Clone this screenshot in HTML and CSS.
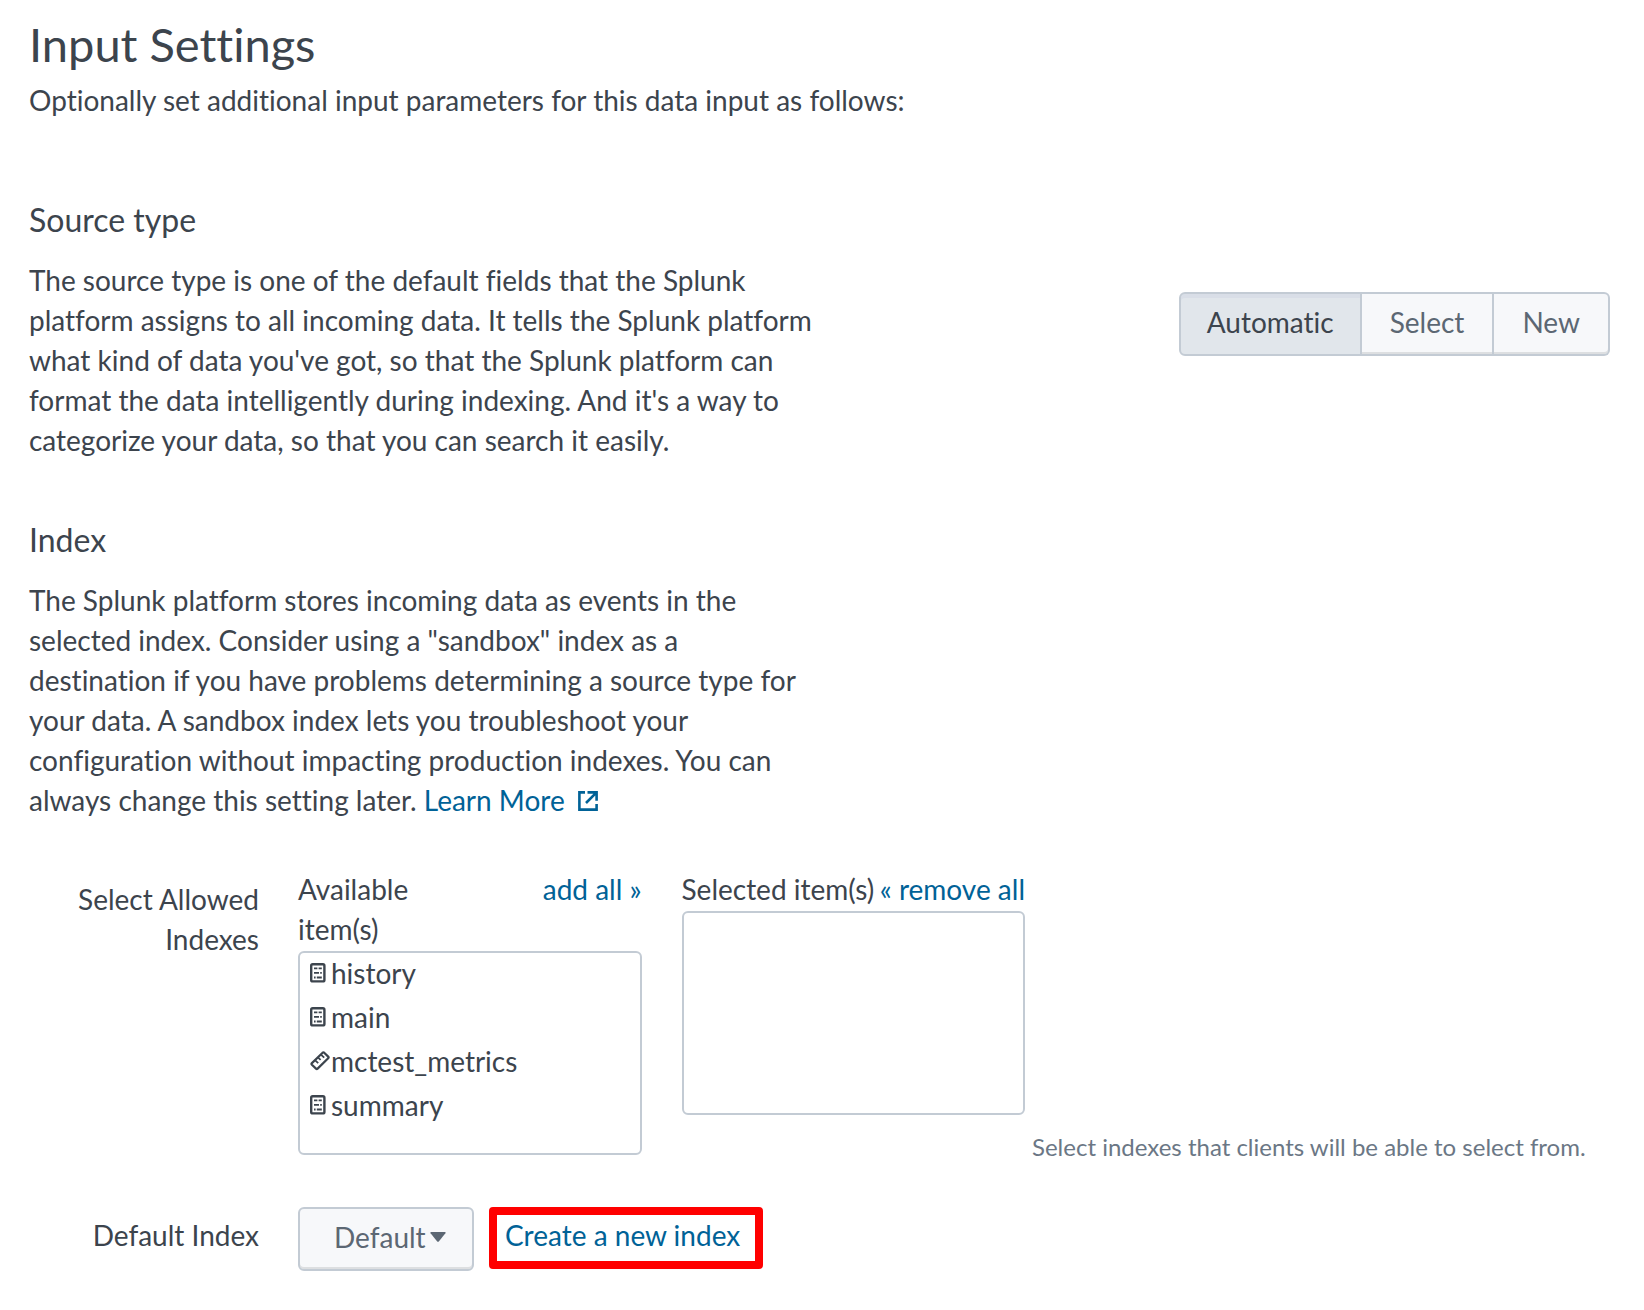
FILE: index.html
```html
<!DOCTYPE html>
<html lang="en">
<head>
<meta charset="utf-8">
<title>Input Settings</title>
<link rel="stylesheet" href="styles.css">
</head>
<body>
<svg class="sprite" aria-hidden="true">
  <symbol id="icon-events" viewBox="0 0 16 20">
    <rect x="1.2" y="1.2" width="13.2" height="17.2" rx="1.5" fill="none" stroke="currentColor" stroke-width="2.4"/>
    <path d="M4 5.3h3.4M8.6 5.3h3.2M4 9.9h5M10.2 9.9h1.6M4 14.5h1.6M6.8 14.5h5" stroke="currentColor" stroke-width="1.8"/>
  </symbol>
  <symbol id="icon-metrics" viewBox="0 0 20 20">
    <path d="M1.9 12.1 12.6 1.7q.8-.7 1.6 0l4 3.9q.8.8 0 1.6L7.6 17.6q-.8.8-1.6 0l-4.1-3.9q-.8-.8 0-1.6Z" fill="none" stroke="currentColor" stroke-width="2.2"/>
    <path d="m5.2 9.4 3 2.8M8.2 6.6l2.4 2.2M11.2 3.8l3 2.8" stroke="currentColor" stroke-width="1.8"/>
  </symbol>
</svg>
<main class="page">
  <header class="intro">
    <h1 class="title">Input Settings</h1>
    <p class="text">Optionally set additional input parameters for this data input as follows:</p>
  </header>

  <section class="section">
    <h2 class="heading">Source type</h2>
    <div class="section-row">
      <p class="text copy">The source type is one of the default fields that the Splunk platform assigns to all incoming data. It tells the Splunk platform what kind of data you've got, so that the Splunk platform can format the data intelligently during indexing. And it's a way to categorize your data, so that you can search it easily.</p>
      <div class="button-group" role="group" aria-label="Source type">
        <button type="button" class="button button-active" aria-pressed="true">Automatic</button>
        <button type="button" class="button" aria-pressed="false">Select</button>
        <button type="button" class="button" aria-pressed="false">New</button>
      </div>
    </div>
  </section>

  <section class="section">
    <h2 class="heading">Index</h2>
    <p class="text copy">The Splunk platform stores incoming data as events in the selected index. Consider using a "sandbox" index as a destination if you have problems determining a source type for your data. A sandbox index lets you troubleshoot your configuration without impacting production indexes. You can always change this setting later. <a class="link" href="#learn-more">Learn More <svg class="icon-external" viewBox="0 0 20 20" aria-hidden="true"><path d="M7 1.4H1.4v17.2h17.2V13M9.5 1.4h9.1v8.4M17.8 2.2 8 12" fill="none" stroke="currentColor" stroke-width="2.6"/></svg></a></p>
  </section>

  <div class="form">
    <div class="form-row">
      <div class="form-label form-label-lists">Select Allowed Indexes</div>
      <div class="lists">
        <div class="list">
          <div class="list-head">
            <span class="list-title list-title-narrow" id="available">Available item(s)</span>
            <a class="link" href="#add-all">add all »</a>
          </div>
          <ul class="list-box" aria-labelledby="available">
            <li class="item"><svg class="icon"><use href="#icon-events" width="16" height="20"/></svg>history</li>
            <li class="item"><svg class="icon"><use href="#icon-events" width="16" height="20"/></svg>main</li>
            <li class="item"><svg class="icon"><use href="#icon-metrics" width="20" height="20"/></svg>mctest_metrics</li>
            <li class="item"><svg class="icon"><use href="#icon-events" width="16" height="20"/></svg>summary</li>
          </ul>
        </div>
        <div class="list">
          <div class="list-head">
            <span class="list-title" id="selected">Selected item(s)</span>
            <a class="link" href="#remove-all">« remove all</a>
          </div>
          <ul class="list-box" aria-labelledby="selected"></ul>
        </div>
      </div>
      <p class="help">Select indexes that clients will be able to select from.</p>
    </div>

    <div class="form-row">
      <label class="form-label form-label-control" for="default-index">Default Index</label>
      <div class="controls">
        <div class="dropdown">
          <select class="button dropdown-field" id="default-index"><option>Default</option></select>
          <svg class="caret" viewBox="0 0 16 10" aria-hidden="true"><path d="M1 0h14q1 .3.4 1.2L9 9.2q-1 1-2 0L.6 1.2Q0 .3 1 0Z" fill="currentColor"/></svg>
        </div>
        <a class="link create" href="#new-index">Create a new index</a>
      </div>
    </div>
  </div>
</main>
</body>
</html>
```
FILE: styles.css
```css
* { box-sizing: border-box; }

body {
  margin: 0;
  background: #fff;
  color: #3c444d;
  font: 28px/40px Lato, "Open Sans", sans-serif;
  font-variant-ligatures: none;
}

h1, h2, p, ul { margin: 0; padding: 0; }

.sprite { display: none; }

.page { padding: 14px 34px 40px 29px; }

.title { font-size: 47px; font-weight: 400; line-height: 60px; }
.intro { margin-bottom: 80px; }
.intro .text { padding-top: 6px; }

.section { margin-bottom: 60px; }
.heading { margin-bottom: 20px; font-size: 32px; font-weight: 400; line-height: 40px; }
.section-row { display: flex; justify-content: space-between; align-items: flex-start; gap: 40px; }
.copy { max-width: 790px; }

.link { color: #006297; text-decoration: none; }
.icon-external { width: 20px; height: 20px; margin-left: 6px; }

.button {
  height: 64px;
  border: 2px solid #c3cbd4;
  background: #f7f8fa;
  box-shadow: inset 0 -2px #dddfe1;
  color: #5c6773;
  font: inherit;
}
.button-group { display: flex; flex-shrink: 0; margin-top: 32px; }
.button-group .button { padding: 0 28px 4px; }
.button-group .button + .button { border-left: 0; }
.button-group .button:first-child { border-radius: 6px 0 0 6px; }
.button-group .button:last-child { border-radius: 0 6px 6px 0; }
.button-group .button-active {
  padding: 0 26px 4px;
  background: #e1e6eb;
  box-shadow: inset 0 4px #d9dee7;
  color: #3c444d;
}

.form { display: grid; gap: 52px; margin-top: -11px; }
.form-row { display: flex; }
.form-label { flex: 0 0 230px; margin-right: 39px; text-align: right; }
.form-label-lists { padding: 10px 0 0 29px; }
.form-label-control { padding-top: 8px; }

.lists { display: flex; flex: 0 0 727px; gap: 40px; align-items: flex-start; }
.list { flex: 1; }
.list-head { display: flex; justify-content: space-between; white-space: nowrap; }
.list-title-narrow { width: 120px; white-space: normal; }
.list-box {
  height: 204px;
  margin-top: 2px;
  padding-left: 10px;
  border: 2px solid #c3cbd4;
  border-radius: 6px;
  list-style: none;
}
.item { display: flex; align-items: center; padding-bottom: 4px; }
.icon { flex: none; width: 21px; height: 20px; }

.help { align-self: flex-end; margin: 0 0 -6px 7px; color: #6b7785; font-size: 24px; line-height: 28px; }

.controls { display: flex; gap: 15px; align-items: flex-start; }
.dropdown { display: grid; align-items: center; }
.dropdown-field {
  grid-area: 1 / 1;
  width: 176px;
  padding: 0 34px 4px;
  border-radius: 6px;
  appearance: none;
}
.caret { grid-area: 1 / 1; justify-self: end; width: 16px; height: 10px; margin: 0 28px 4px 0; color: #5c6773; pointer-events: none; }
.create { height: 62px; padding: 0 15px 0 8px; border: 8px solid #f00; border-radius: 4px; }
```
